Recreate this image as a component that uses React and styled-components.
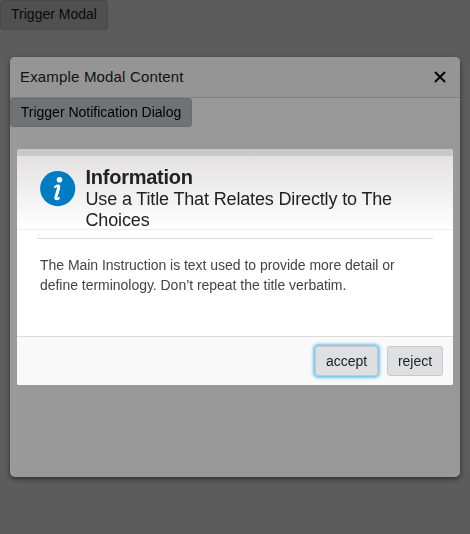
import React from "react";
import styled, { createGlobalStyle } from "styled-components";

const GlobalStyle = createGlobalStyle`
  * { box-sizing: border-box; }
  body {
    margin: 0;
    background: #fff;
    color: #222;
    font-family: "Liberation Sans", Arial, sans-serif;
    font-size: 14px;
    line-height: 20px;
    overflow: hidden;
  }
`;

const Page = styled.main`
  min-height: 100vh;
`;

const Button = styled.button`
  display: block;
  height: ${(p) => p.$height || 30}px;
  width: ${(p) => p.$width}px;
  padding: 0 0 ${(p) => (p.$raised ? 2 : 0)}px;
  border: 1px solid ${(p) => (p.$active ? "#b3b5b6" : "#c8c9ca")};
  border-radius: 3px;
  background: ${(p) => (p.$active ? "#bbbec0" : "#dedfe0")};
  color: ${(p) => (p.$active ? "#000" : "#222")};
  font: 14px/20px "Liberation Sans", Arial, sans-serif;
  white-space: nowrap;
  outline: none;
  ${(p) => p.$focused && "box-shadow: 0 0 3px 2px #6fc4ef;"}
`;

const Overlay = styled.div`
  position: fixed;
  inset: 0;
  display: flex;
  align-items: center;
  justify-content: center;
  background: rgba(0, 0, 0, 0.4);
`;

const Modal = styled.section`
  width: 450px;
  height: 420px;
  border-radius: 5px;
  background: #fff;
  box-shadow: 0 2px 5px rgba(0, 0, 0, 0.5);
  overflow: hidden;
`;

const ModalHeader = styled.header`
  display: flex;
  align-items: center;
  justify-content: space-between;
  height: 41px;
  padding: 0 14px 0 10px;
  border-bottom: 1px solid #d8d8d8;
  background: #f9f9f9;
`;

const ModalTitle = styled.h1`
  margin: 0;
  font-size: 15px;
  font-weight: 400;
  letter-spacing: 0.17px;
`;

const CloseIcon = styled.svg`
  display: block;
  width: 12px;
  height: 12px;
`;

const Dialog = styled.section`
  display: flex;
  flex-direction: column;
  width: 436px;
  height: 236px;
  border-top: 7px solid #c8c9ca;
  border-radius: 2px;
  background: #fff;
  overflow: hidden;
`;

const DialogHeader = styled.header`
  display: flex;
  height: 74px;
  padding: 10px 30px 0 23px;
  border-bottom: 1px solid #eee;
  background: linear-gradient(#e3e1e2, #fff);
`;

const InfoIcon = styled.svg`
  flex: none;
  width: 36px;
  height: 36px;
  margin: 5px 9.5px 0 0;
`;

const DialogTitle = styled.h2`
  margin: 0;
  color: #222;
  font-size: 20px;
  line-height: 22px;
  letter-spacing: -0.25px;
`;

const DialogSubtitle = styled.p`
  margin: 1px 0 0;
  color: #222;
  font-size: 18px;
  line-height: 21px;
  letter-spacing: -0.15px;
`;

const Divider = styled.hr`
  width: 396px;
  height: 1px;
  margin: 8px 0 0 20px;
  border: 0;
  background: #dcdcdc;
`;

const DialogBody = styled.p`
  flex: 1;
  margin: 0;
  padding: 16px 40px 0 23px;
  color: #444;
  letter-spacing: -0.03px;
`;

const DialogFooter = styled.footer`
  display: flex;
  gap: 9px;
  justify-content: flex-end;
  height: 49px;
  padding: 9px 10px 0;
  border-top: 1px solid #dcdcdc;
  background: #f9f9f9;
`;

export default function App() {
  return (
    <Page>
      <GlobalStyle />
      <Button $width={108} $raised>Trigger Modal</Button>
      <Overlay>
        <Modal role="dialog" aria-label="Example Modal Content">
          <ModalHeader>
            <ModalTitle>Example Modal Content</ModalTitle>
            <CloseIcon viewBox="0 0 12 12" aria-hidden="true">
              <path d="M1.5 1.5l9 9M10.5 1.5l-9 9" stroke="#000" strokeWidth="1.9" strokeLinecap="round" />
            </CloseIcon>
          </ModalHeader>
          <Button $width={182} $height={29} $active $raised>Trigger Notification Dialog</Button>
        </Modal>
      </Overlay>
      <Overlay>
        <Dialog role="alertdialog" aria-label="Information">
          <DialogHeader>
            <InfoIcon viewBox="0 0 36 36" aria-hidden="true">
              <circle cx="17.7" cy="17.6" r="17.6" fill="#007cc3" />
              <circle cx="19.5" cy="8.7" r="2.8" fill="#fff" />
              <path
                d="M15 15.9C16.6 14.9 18.2 14.5 18.9 14.8C19.6 15.2 19.1 16.6 18.5 18.8C17.8 21.5 16.2 25.2 15.6 27C15.2 28.4 17.2 28.4 18.9 27.1"
                fill="none"
                stroke="#fff"
                strokeWidth="2.2"
                strokeLinecap="round"
                strokeLinejoin="round"
              />
              <path d="M17.4 15.4L20.2 16L17.4 26.6L14.3 26.6Z" fill="#fff" />
            </InfoIcon>
            <div>
              <DialogTitle>Information</DialogTitle>
              <DialogSubtitle>Use a Title That Relates Directly to The Choices</DialogSubtitle>
            </div>
          </DialogHeader>
          <Divider />
          <DialogBody>
            The Main Instruction is text used to provide more detail or define terminology. Don’t repeat the title verbatim.
          </DialogBody>
          <DialogFooter>
            <Button $width={63} $focused>accept</Button>
            <Button $width={56}>reject</Button>
          </DialogFooter>
        </Dialog>
      </Overlay>
    </Page>
  );
}
